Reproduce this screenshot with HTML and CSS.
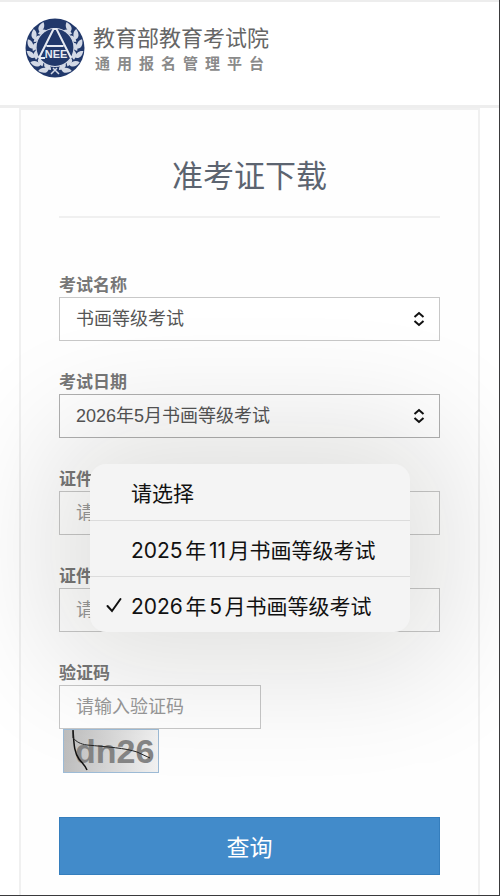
FILE: index.html
```html
<!DOCTYPE html>
<html lang="zh-CN">
<head>
  <meta charset="UTF-8" />
  <meta name="viewport" content="width=device-width, initial-scale=1.0" />
  <title>准考证下载</title>
  <link rel="stylesheet" href="styles.css">
</head>
<body>
  <header class="header">
    <svg class="logo" viewBox="0 0 60 60" aria-hidden="true">
      <defs>
        <g id="leaf">
          <path d="M29 1.500C35 2 38 5 36.500 9.500C32 8.500 29 6 29 1.500Z" />
          <path d="M30 12C30 8 34 7 39 9.500C37.500 12.500 34 13.500 30 12Z" />
        </g>
        <g id="branch">
          <use href="#leaf" transform="rotate(26 30 30)" />
          <use href="#leaf" transform="rotate(50 30 30)" />
          <use href="#leaf" transform="rotate(74 30 30)" />
          <use href="#leaf" transform="rotate(98 30 30)" />
          <use href="#leaf" transform="rotate(122 30 30)" />
          <use href="#leaf" transform="rotate(146 30 30)" />
        </g>
      </defs>
      <circle cx="30" cy="30" r="29.500" fill="#21386b" />
      <g fill="#d3d9e6">
        <use href="#branch" />
        <use href="#branch" transform="translate(60 0) scale(-1 1)" />
      </g>
      <circle cx="30" cy="29.500" r="19" fill="#21386b" stroke="#d3d9e6" stroke-width="1.200" />
      <path d="M26 56L32 50M34 56L28 50" stroke="#d3d9e6" stroke-width="1.500" />
      <path d="M14 40L28.500 11H31.500L46 40M21.500 28H38.500M14 40H20" fill="none" stroke="#e6eaf2" stroke-width="2" />
      <text x="31" y="40" class="logo-letters">NEE</text>
    </svg>
    <div class="brand">
      <div class="brand-name">教育部教育考试院</div>
      <div class="brand-sub">通用报名管理平台</div>
    </div>
  </header>

  <main class="card">
    <h1 class="title">准考证下载</h1>
    <form class="form">
      <div class="field">
        <label for="exam-name">考试名称</label>
        <div class="select-box">
          <select id="exam-name">
            <option>书画等级考试</option>
          </select>
          <svg class="arrows" viewBox="0 0 12 16" aria-hidden="true"><path d="M1.500 6L6 2L10.500 6M1.500 10L6 14L10.500 10" /></svg>
        </div>
      </div>
      <div class="field">
        <label for="exam-date">考试日期</label>
        <div class="select-box">
          <select id="exam-date">
            <option>请选择</option>
            <option>2025年11月书画等级考试</option>
            <option selected>2026年5月书画等级考试</option>
          </select>
          <svg class="arrows" viewBox="0 0 12 16" aria-hidden="true"><path d="M1.500 6L6 2L10.500 6M1.500 10L6 14L10.500 10" /></svg>
        </div>
        <div class="menu" role="listbox" aria-label="考试日期">
          <button type="button" class="menu-item" role="option" aria-selected="false">请选择</button>
          <button type="button" class="menu-item" role="option" aria-selected="false">2025年11月书画等级考试</button>
          <button type="button" class="menu-item" role="option" aria-selected="true">
            <svg class="check" viewBox="0 0 16 16" aria-hidden="true"><path d="M1.500 9L6 14L14.500 2" /></svg>2026年5月书画等级考试</button>
        </div>
      </div>
      <div class="field">
        <label for="id-type">证件</label>
        <input type="text" id="id-type" placeholder="请">
      </div>
      <div class="field">
        <label for="id-number">证件</label>
        <input type="text" id="id-number" placeholder="请">
      </div>
      <div class="field">
        <label for="captcha">验证码</label>
        <input type="text" id="captcha" class="captcha-input" placeholder="请输入验证码">
        <svg class="captcha" viewBox="0 0 96 44" role="img" aria-label="验证码">
          <defs>
            <linearGradient id="captcha-bg">
              <stop offset="0" stop-color="#bdbdbd" />
              <stop offset="1" stop-color="#f2f2f2" />
            </linearGradient>
          </defs>
          <rect x="0.500" y="0.500" width="95" height="43" fill="url(#captcha-bg)" stroke="#9dbbd6" />
          <text x="12" y="34" class="captcha-text">dn26</text>
          <path d="M10 1C11 15 11 23 16 30C20 35 22 36 24 41" fill="none" stroke="#111" stroke-width="1.500" />
          <path d="M10 2V9C14 13 17 15 24 16C45 18 62 19 74 23L87 29" fill="none" stroke="#222" />
        </svg>
      </div>
      <button type="submit" class="submit">查询</button>
    </form>
  </main>
</body>
</html>
```
FILE: styles.css
```css
* { box-sizing: border-box; }
body {
  margin: 0;
  min-height: 100vh;
  display: flex;
  flex-direction: column;
  font-family: "Liberation Sans", "Noto Sans CJK SC", sans-serif;
  background: #fff;
  color: #555;
  border-right: 1px solid #3a3a3c;
  border-bottom: 1px solid #3a3a3c;
}
.header {
  display: flex;
  align-items: flex-start;
  gap: 8px;
  height: 108px;
  padding: 16px 25px;
  border-top: 2px solid #ededed;
  border-bottom: 3px solid #eee;
}
.logo {
  width: 60px;
  height: 60px;
}
.logo-letters {
  font: bold 11px "Liberation Sans", sans-serif;
  fill: #e6eaf2;
  text-anchor: middle;
}
.brand {
  padding-top: 7px;
  color: #666;
}
.brand-name {
  font-size: 22px;
  line-height: 28px;
}
.brand-sub {
  padding-left: 2px;
  font-size: 15px;
  font-weight: bold;
  line-height: 22px;
  letter-spacing: 7px;
  color: #8a8a8a;
}
.card {
  flex: 1;
  margin: 0 19px;
  padding: 40px 38px 20px;
  background: #fefefe;
  border: 2px solid #f0f0f0;
  border-bottom: none;
}
.title {
  margin: 0 0 57px;
  padding-bottom: 12px;
  border-bottom: 2px solid #f0f0f0;
  font-size: 31px;
  font-weight: normal;
  line-height: 54px;
  text-align: center;
  color: #5c6470;
}
.field {
  position: relative;
  margin-bottom: 31px;
}
.field label {
  display: block;
  font-size: 17px;
  font-weight: bold;
  line-height: 22px;
  color: #777;
}
.select-box {
  position: relative;
}
.field input,
.field select {
  display: block;
  width: 100%;
  height: 44px;
  padding: 0 16px;
  font-family: inherit;
  font-size: 18px;
  color: #555;
  background: #fff;
  border: 1px solid #c8c8c8;
  border-radius: 0;
  outline: none;
  appearance: none;
}
.field select:focus,
#exam-date {
  border-color: #b0b0b0;
}
.field input::placeholder {
  color: #999;
}
.arrows {
  position: absolute;
  top: 14px;
  right: 15px;
  width: 12px;
  height: 16px;
  fill: none;
  stroke: #111;
  stroke-width: 2;
  pointer-events: none;
}
.menu {
  position: absolute;
  z-index: 10;
  top: 92px;
  left: 31px;
  right: 30px;
  background: #f4f4f4;
  border-radius: 16px;
  box-shadow: 0 0 120px 40px rgba(20, 20, 10, 0.12);
}
.menu-item {
  position: relative;
  display: block;
  width: 100%;
  height: 56px;
  padding: 0 0 0 41px;
  font-family: Inter, "Noto Sans CJK SC", sans-serif;
  font-size: 21px;
  text-align: left;
  text-autospace: normal;
  white-space: nowrap;
  color: #111;
  background: none;
  border: none;
}
.menu-item + .menu-item {
  border-top: 1px solid #dcdcdc;
}
.check {
  position: absolute;
  top: 20px;
  left: 16px;
  width: 16px;
  height: 16px;
  fill: none;
  stroke: #111;
  stroke-width: 2;
  stroke-linecap: round;
}
.field .captcha-input {
  width: 53%;
}
.captcha {
  display: block;
  width: 96px;
  height: 44px;
  margin-left: 4px;
}
.captcha-text {
  font: bold 34px "Liberation Sans", sans-serif;
  fill: #858585;
}
.submit {
  display: block;
  width: 100%;
  height: 58px;
  margin-top: 44px;
  font-family: inherit;
  font-size: 23px;
  color: #fff;
  background: #428bca;
  border: 1px solid #357ebd;
  cursor: pointer;
}
```
